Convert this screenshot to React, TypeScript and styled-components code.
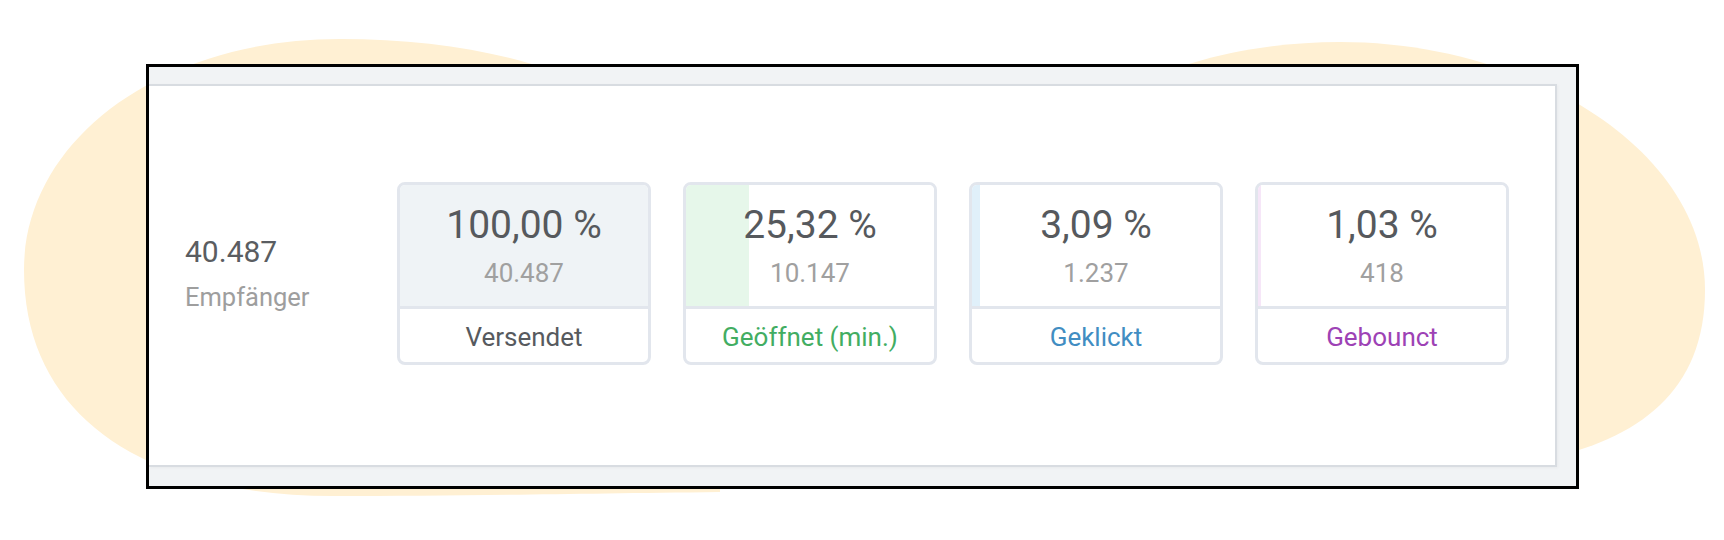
import React from "react";
import styled, { createGlobalStyle } from "styled-components";

const GlobalStyle = createGlobalStyle`
  html, body {
    margin: 0;
    padding: 0;
    background: #ffffff;
  }
  body {
    font-family: Roboto, "Liberation Sans", Arial, sans-serif;
  }
`;

const Stage = styled.div`
  position: relative;
  width: 1724px;
  height: 540px;
  overflow: hidden;
  box-sizing: border-box;
  padding: 64px 0 0 146px;
`;

const Blobs = styled.svg`
  position: absolute;
  inset: 0;
  width: 1724px;
  height: 540px;
  z-index: 0;
`;

const Frame = styled.div`
  position: relative;
  z-index: 1;
  box-sizing: border-box;
  width: 1433px;
  height: 425px;
  border: 3px solid #000000;
  background: #f1f3f5;
  padding: 17px 19px 19px 0;
  display: flex;
`;

const Panel = styled.div`
  flex: 1;
  display: flex;
  align-items: center;
  background: #ffffff;
  border: 2px solid #d8dce1;
  border-left: none;
  padding: 0 0 4px 36px;
  box-shadow: 1px 1px 3px rgba(0, 0, 0, 0.04);
`;

const Total = styled.div`
  width: 212px;
  display: flex;
  flex-direction: column;
  gap: 12px;
  margin-top: -2px;
`;

const TotalValue = styled.div`
  font-size: 30px;
  line-height: 36px;
  color: #5a5d61;
`;

const TotalLabel = styled.div`
  font-size: 25.5px;
  line-height: 30px;
  color: #9e9e9e;
`;

const Cards = styled.div`
  display: flex;
  gap: 32px;
`;

const Card = styled.div`
  box-sizing: border-box;
  width: 254px;
  height: 183px;
  border: 3px solid #e2e6ed;
  border-radius: 8px;
  overflow: hidden;
  display: flex;
  flex-direction: column;
  background: #ffffff;
`;

const Stats = styled.div<{ $fill: string; $pct: number }>`
  height: 121px;
  display: flex;
  flex-direction: column;
  align-items: center;
  justify-content: center;
  gap: 11px;
  background: linear-gradient(
    to right,
    ${({ $fill }) => $fill} 0,
    ${({ $fill }) => $fill} ${({ $pct }) => $pct}%,
    #ffffff ${({ $pct }) => $pct}%
  );
  border-bottom: 3px solid #e2e6ed;
`;

const Percent = styled.div`
  font-size: 39px;
  line-height: 44px;
  color: #56595d;
`;

const Count = styled.div`
  font-size: 26px;
  line-height: 30px;
  color: #a0a0a0;
`;

const Label = styled.div<{ $color: string }>`
  flex: 1;
  display: flex;
  align-items: center;
  justify-content: center;
  padding-top: 2px;
  font-size: 26px;
  color: ${({ $color }) => $color};
`;

interface Metric {
  percent: string;
  value: number;
  count: string;
  label: string;
  color: string;
  fill: string;
}

const metrics: Metric[] = [
  {
    percent: "100,00 %",
    value: 100,
    count: "40.487",
    label: "Versendet",
    color: "#575a5e",
    fill: "#eff3f6",
  },
  {
    percent: "25,32 %",
    value: 25.32,
    count: "10.147",
    label: "Geöffnet (min.)",
    color: "#42ad62",
    fill: "#e6f7ea",
  },
  {
    percent: "3,09 %",
    value: 3.09,
    count: "1.237",
    label: "Geklickt",
    color: "#418dc2",
    fill: "#e0f0fa",
  },
  {
    percent: "1,03 %",
    value: 1.03,
    count: "418",
    label: "Gebounct",
    color: "#9d42b5",
    fill: "#f6e6f8",
  },
];

const App: React.FC = () => {
  return (
    <>
      <GlobalStyle />
      <Stage>
        <Blobs viewBox="0 0 1724 540" aria-hidden="true">
          <path
            d="M340 39 C560 39 720 120 720 267 L720 492 C560 494 450 496 333 496 C150 496 24 420 24 270 C24 140 160 39 340 39 Z"
            fill="#fff0d3"
          />
          <path
            d="M1340 42 C1530 42 1705 150 1705 290 C1705 390 1640 440 1540 460 L975 470 L975 290 C975 150 1140 42 1340 42 Z"
            fill="#fff0d3"
          />
        </Blobs>
        <Frame>
          <Panel>
            <Total>
              <TotalValue>40.487</TotalValue>
              <TotalLabel>Empfänger</TotalLabel>
            </Total>
            <Cards>
              {metrics.map((m) => (
                <Card key={m.label}>
                  <Stats $fill={m.fill} $pct={m.value}>
                    <Percent>{m.percent}</Percent>
                    <Count>{m.count}</Count>
                  </Stats>
                  <Label $color={m.color}>{m.label}</Label>
                </Card>
              ))}
            </Cards>
          </Panel>
        </Frame>
      </Stage>
    </>
  );
};

export default App;
